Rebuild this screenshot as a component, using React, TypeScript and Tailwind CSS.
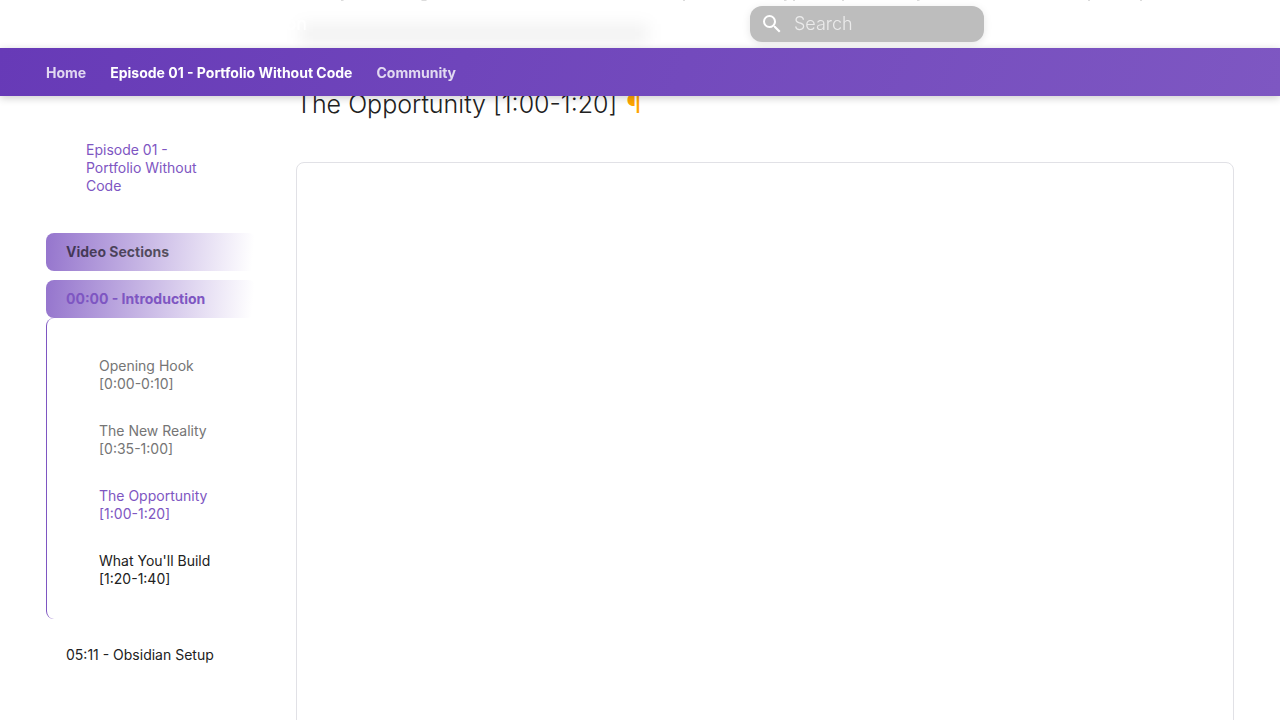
import { useId } from "react";

const tabs = [
  { label: "Home", active: false },
  { label: "Episode 01 - Portfolio Without Code", active: true },
  { label: "Community", active: false },
];

const sections = [
  { title: "Opening Hook", time: "[0:00-0:10]", tone: "text-[#757575]" },
  { title: "The New Reality", time: "[0:35-1:00]", tone: "text-[#757575]" },
  { title: "The Opportunity", time: "[1:00-1:20]", tone: "text-[#7e56c2]" },
  { title: "What You'll Build", time: "[1:20-1:40]", tone: "text-[#212121]" },
];

function Header() {
  const searchId = useId();
  return (
    <header className="fixed inset-x-0 top-0 z-10">
      <div className="relative flex h-12 items-center justify-end pr-[296px]">
        {/* Last traces of the paragraph scrolled away under the header */}
        <svg
          viewBox="0 0 860 2"
          className="absolute top-0 left-[296px] h-0.5 w-[860px] fill-[#dcdcdc]"
          aria-hidden="true"
        >
          <path d="M45 0h3l-1 1h-2zM125 0h6l-1 1h-4zM387 0h2v1h-2zM488 0h3l-1 1h-2zM497 0h2v1h-2zM546 0h2v1h-2zM621 0h3l-1 1h-2zM792 0h2v1h-2zM844 0h2v1h-2z" />
        </svg>
        <div className="absolute top-6 left-[300px] h-5 w-[348px] bg-black/5 blur-[8px]" />
        <span className="absolute top-2.5 right-[973px] text-lg font-normal text-white">
          Introduction
        </span>
        <form
          role="search"
          className="relative flex h-9 w-[234px] items-center rounded-xl bg-[#bdbdbd] px-[10px] shadow-[0_2px_8px_rgba(0,0,0,0.1)]"
        >
          <label htmlFor={searchId} aria-label="Search">
            <svg viewBox="0 0 24 24" className="size-6 fill-white" aria-hidden="true">
              <path d="M9.5 3A6.5 6.5 0 0 1 16 9.5c0 1.61-.59 3.09-1.56 4.23l.27.27h.79l5 5-1.5 1.5-5-5v-.79l-.27-.27A6.52 6.52 0 0 1 9.5 16 6.5 6.5 0 0 1 3 9.5 6.5 6.5 0 0 1 9.5 3m0 2C7 5 5 7 5 9.5S7 14 9.5 14 14 12 14 9.5 12 5 9.5 5" />
            </svg>
          </label>
          <input
            id={searchId}
            type="text"
            placeholder="Search"
            className="ml-[10px] min-w-0 flex-1 bg-transparent text-lg font-light text-white outline-none placeholder:text-white/70"
          />
        </form>
      </div>
      <nav
        aria-label="Tabs"
        className="relative h-12 bg-linear-110 from-[#673ab7] to-[#7e57c2] px-[46px] shadow-[0_2px_8px_rgba(0,0,0,0.2)]"
      >
        <ul className="flex h-full items-center gap-6 pt-0.5 text-sm font-bold">
          {tabs.map((tab) => (
            <li key={tab.label}>
              <a href="#" className={tab.active ? "text-white" : "text-white/80"}>
                {tab.label}
              </a>
            </li>
          ))}
        </ul>
      </nav>
    </header>
  );
}

function Sidebar() {
  return (
    <nav aria-label="Contents" className="w-[210px] shrink-0 pt-[141px] text-sm leading-[18px]">
      <a href="#" className="ml-10 block w-[120px] text-[#7e56c2]">
        Episode 01 - Portfolio Without Code
      </a>
      <h2 className="mt-[38px] rounded-lg bg-linear-95 from-[#9575cd] to-transparent to-98% px-5 py-[10px] font-bold text-black/60">
        Video Sections
      </h2>
      <a
        href="#"
        className="mt-[9px] block rounded-lg bg-linear-95 from-[#9575cd] to-transparent to-98% px-5 py-[10px] font-bold text-[#7e56c2]"
      >
        00:00 - Introduction
      </a>
      <ul className="flex flex-col gap-[29px] rounded-lg border-l border-[#7e56c2] pt-[39px] pb-[31px] pl-[52px]">
        {sections.map((section) => (
          <li key={section.title}>
            <a href="#" className={section.tone}>
              {section.title}
              <br />
              {section.time}
            </a>
          </li>
        ))}
      </ul>
      <a href="#" className="mt-[27px] ml-5 block text-[#212121]">
        05:11 - Obsidian Setup
      </a>
    </nav>
  );
}

export default function App() {
  return (
    <div className="min-h-screen bg-white font-['Inter',sans-serif] text-[#212121]">
      <Header />
      <div className="flex gap-10 px-[46px]">
        <Sidebar />
        <main className="min-w-0 flex-1 pt-[84px]">
          <h3 className="text-[25px] leading-10 font-light">
            The Opportunity [1:00-1:20]{" "}
            <a href="#" aria-label="Permanent link" className="ml-0.5 font-normal text-[#ffa500]">
              ¶
            </a>
          </h3>
          <div className="mt-[38px] h-[640px] rounded-lg border border-[#e1e1e6]" />
        </main>
      </div>
    </div>
  );
}
